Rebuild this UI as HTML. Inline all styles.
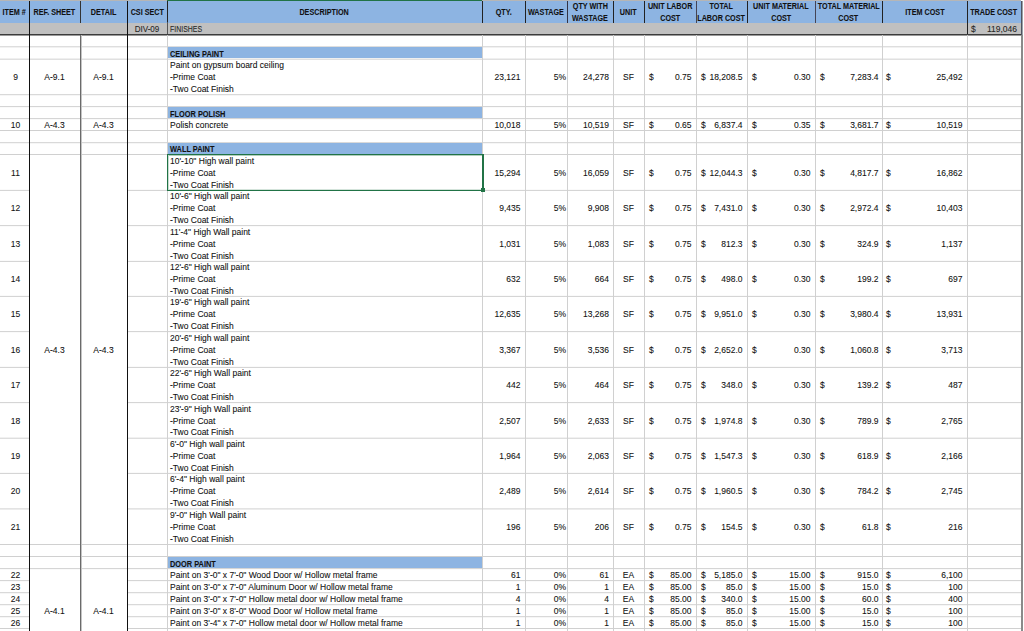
<!DOCTYPE html>
<html><head><meta charset="utf-8"><style>
html,body{margin:0;padding:0;}
body{width:1024px;height:631px;overflow:hidden;position:relative;background:#fff;font-family:"Liberation Sans",sans-serif;}
div{position:absolute;box-sizing:border-box;}
p{position:absolute;margin:0;white-space:nowrap;line-height:1;color:#111;-webkit-text-stroke:0.08px #111;}
p.t{font-size:8.5px;}
p.b{font-size:8.8px;font-weight:bold;}
</style></head><body>
<div style="left:0px;top:0px;width:1021px;height:1px;background:#b6b6b6;"></div>
<div style="left:167px;top:0px;width:315px;height:1px;background:#217346;"></div>
<div style="left:0px;top:1px;width:1022px;height:21.5px;background:#8db4e2;"></div>
<div style="left:0px;top:22.5px;width:1022px;height:11.5px;background:#c0c0c0;"></div>
<div style="left:0px;top:34px;width:1022px;height:1px;background:#3c3c3c;"></div>
<div style="left:0px;top:35px;width:1022px;height:1px;background:#9a9a9a;"></div>
<div style="left:0px;top:46px;width:29px;height:1px;background:#dedede;"></div>
<div style="left:0px;top:47px;width:29px;height:1px;background:#f1f1f1;"></div>
<div style="left:127px;top:46px;width:894px;height:1px;background:#dedede;"></div>
<div style="left:127px;top:47px;width:894px;height:1px;background:#f1f1f1;"></div>
<div style="left:0px;top:58px;width:29px;height:1px;background:#efefef;"></div>
<div style="left:0px;top:59px;width:29px;height:1px;background:#e0e0e0;"></div>
<div style="left:127px;top:58px;width:894px;height:1px;background:#efefef;"></div>
<div style="left:127px;top:59px;width:894px;height:1px;background:#e0e0e0;"></div>
<div style="left:0px;top:94px;width:29px;height:1px;background:#d9d9d9;"></div>
<div style="left:0px;top:95px;width:29px;height:1px;background:#f6f6f6;"></div>
<div style="left:127px;top:94px;width:894px;height:1px;background:#d9d9d9;"></div>
<div style="left:127px;top:95px;width:894px;height:1px;background:#f6f6f6;"></div>
<div style="left:0px;top:106px;width:29px;height:1px;background:#d5d5d5;"></div>
<div style="left:0px;top:107px;width:29px;height:1px;background:#fafafa;"></div>
<div style="left:127px;top:106px;width:894px;height:1px;background:#d5d5d5;"></div>
<div style="left:127px;top:107px;width:894px;height:1px;background:#fafafa;"></div>
<div style="left:0px;top:118px;width:29px;height:1px;background:#d5d5d5;"></div>
<div style="left:0px;top:119px;width:29px;height:1px;background:#fafafa;"></div>
<div style="left:127px;top:118px;width:894px;height:1px;background:#d5d5d5;"></div>
<div style="left:127px;top:119px;width:894px;height:1px;background:#fafafa;"></div>
<div style="left:0px;top:130px;width:29px;height:1px;background:#d0d0d0;"></div>
<div style="left:127px;top:130px;width:894px;height:1px;background:#d0d0d0;"></div>
<div style="left:0px;top:142px;width:29px;height:1px;background:#d9d9d9;"></div>
<div style="left:0px;top:143px;width:29px;height:1px;background:#f6f6f6;"></div>
<div style="left:127px;top:142px;width:894px;height:1px;background:#d9d9d9;"></div>
<div style="left:127px;top:143px;width:894px;height:1px;background:#f6f6f6;"></div>
<div style="left:0px;top:154px;width:29px;height:1px;background:#d0d0d0;"></div>
<div style="left:127px;top:154px;width:894px;height:1px;background:#d0d0d0;"></div>
<div style="left:0px;top:189px;width:29px;height:1px;background:#fafafa;"></div>
<div style="left:0px;top:190px;width:29px;height:1px;background:#d5d5d5;"></div>
<div style="left:127px;top:189px;width:894px;height:1px;background:#fafafa;"></div>
<div style="left:127px;top:190px;width:894px;height:1px;background:#d5d5d5;"></div>
<div style="left:0px;top:225px;width:29px;height:1px;background:#d5d5d5;"></div>
<div style="left:0px;top:226px;width:29px;height:1px;background:#fafafa;"></div>
<div style="left:127px;top:225px;width:894px;height:1px;background:#d5d5d5;"></div>
<div style="left:127px;top:226px;width:894px;height:1px;background:#fafafa;"></div>
<div style="left:0px;top:260px;width:29px;height:1px;background:#fafafa;"></div>
<div style="left:0px;top:261px;width:29px;height:1px;background:#d5d5d5;"></div>
<div style="left:127px;top:260px;width:894px;height:1px;background:#fafafa;"></div>
<div style="left:127px;top:261px;width:894px;height:1px;background:#d5d5d5;"></div>
<div style="left:0px;top:295px;width:29px;height:1px;background:#fafafa;"></div>
<div style="left:0px;top:296px;width:29px;height:1px;background:#d5d5d5;"></div>
<div style="left:127px;top:295px;width:894px;height:1px;background:#fafafa;"></div>
<div style="left:127px;top:296px;width:894px;height:1px;background:#d5d5d5;"></div>
<div style="left:0px;top:331px;width:29px;height:1px;background:#d5d5d5;"></div>
<div style="left:0px;top:332px;width:29px;height:1px;background:#fafafa;"></div>
<div style="left:127px;top:331px;width:894px;height:1px;background:#d5d5d5;"></div>
<div style="left:127px;top:332px;width:894px;height:1px;background:#fafafa;"></div>
<div style="left:0px;top:366px;width:29px;height:1px;background:#fafafa;"></div>
<div style="left:0px;top:367px;width:29px;height:1px;background:#d5d5d5;"></div>
<div style="left:127px;top:366px;width:894px;height:1px;background:#fafafa;"></div>
<div style="left:127px;top:367px;width:894px;height:1px;background:#d5d5d5;"></div>
<div style="left:0px;top:402px;width:29px;height:1px;background:#d5d5d5;"></div>
<div style="left:0px;top:403px;width:29px;height:1px;background:#fafafa;"></div>
<div style="left:127px;top:402px;width:894px;height:1px;background:#d5d5d5;"></div>
<div style="left:127px;top:403px;width:894px;height:1px;background:#fafafa;"></div>
<div style="left:0px;top:437px;width:29px;height:1px;background:#f1f1f1;"></div>
<div style="left:0px;top:438px;width:29px;height:1px;background:#dedede;"></div>
<div style="left:127px;top:437px;width:894px;height:1px;background:#f1f1f1;"></div>
<div style="left:127px;top:438px;width:894px;height:1px;background:#dedede;"></div>
<div style="left:0px;top:472px;width:29px;height:1px;background:#fafafa;"></div>
<div style="left:0px;top:473px;width:29px;height:1px;background:#d5d5d5;"></div>
<div style="left:127px;top:472px;width:894px;height:1px;background:#fafafa;"></div>
<div style="left:127px;top:473px;width:894px;height:1px;background:#d5d5d5;"></div>
<div style="left:0px;top:508px;width:29px;height:1px;background:#e3e3e3;"></div>
<div style="left:0px;top:509px;width:29px;height:1px;background:#ececec;"></div>
<div style="left:127px;top:508px;width:894px;height:1px;background:#e3e3e3;"></div>
<div style="left:127px;top:509px;width:894px;height:1px;background:#ececec;"></div>
<div style="left:0px;top:544px;width:29px;height:1px;background:#d0d0d0;"></div>
<div style="left:127px;top:544px;width:894px;height:1px;background:#d0d0d0;"></div>
<div style="left:0px;top:556px;width:29px;height:1px;background:#d0d0d0;"></div>
<div style="left:127px;top:556px;width:894px;height:1px;background:#d0d0d0;"></div>
<div style="left:0px;top:568px;width:29px;height:1px;background:#d5d5d5;"></div>
<div style="left:0px;top:569px;width:29px;height:1px;background:#fafafa;"></div>
<div style="left:127px;top:568px;width:894px;height:1px;background:#d5d5d5;"></div>
<div style="left:127px;top:569px;width:894px;height:1px;background:#fafafa;"></div>
<div style="left:0px;top:580px;width:29px;height:1px;background:#d5d5d5;"></div>
<div style="left:0px;top:581px;width:29px;height:1px;background:#fafafa;"></div>
<div style="left:127px;top:580px;width:894px;height:1px;background:#d5d5d5;"></div>
<div style="left:127px;top:581px;width:894px;height:1px;background:#fafafa;"></div>
<div style="left:0px;top:592px;width:29px;height:1px;background:#d9d9d9;"></div>
<div style="left:0px;top:593px;width:29px;height:1px;background:#f6f6f6;"></div>
<div style="left:127px;top:592px;width:894px;height:1px;background:#d9d9d9;"></div>
<div style="left:127px;top:593px;width:894px;height:1px;background:#f6f6f6;"></div>
<div style="left:0px;top:604px;width:29px;height:1px;background:#d9d9d9;"></div>
<div style="left:0px;top:605px;width:29px;height:1px;background:#f6f6f6;"></div>
<div style="left:127px;top:604px;width:894px;height:1px;background:#d9d9d9;"></div>
<div style="left:127px;top:605px;width:894px;height:1px;background:#f6f6f6;"></div>
<div style="left:0px;top:616px;width:29px;height:1px;background:#d9d9d9;"></div>
<div style="left:0px;top:617px;width:29px;height:1px;background:#f6f6f6;"></div>
<div style="left:127px;top:616px;width:894px;height:1px;background:#d9d9d9;"></div>
<div style="left:127px;top:617px;width:894px;height:1px;background:#f6f6f6;"></div>
<div style="left:0px;top:628px;width:29px;height:1px;background:#d0d0d0;"></div>
<div style="left:127px;top:628px;width:894px;height:1px;background:#d0d0d0;"></div>
<div style="left:29px;top:46px;width:98px;height:1px;background:#dedede;"></div>
<div style="left:29px;top:47px;width:98px;height:1px;background:#f1f1f1;"></div>
<div style="left:29px;top:58px;width:98px;height:1px;background:#efefef;"></div>
<div style="left:29px;top:59px;width:98px;height:1px;background:#e0e0e0;"></div>
<div style="left:29px;top:94px;width:98px;height:1px;background:#d9d9d9;"></div>
<div style="left:29px;top:95px;width:98px;height:1px;background:#f6f6f6;"></div>
<div style="left:29px;top:106px;width:98px;height:1px;background:#d5d5d5;"></div>
<div style="left:29px;top:107px;width:98px;height:1px;background:#fafafa;"></div>
<div style="left:29px;top:118px;width:98px;height:1px;background:#d5d5d5;"></div>
<div style="left:29px;top:119px;width:98px;height:1px;background:#fafafa;"></div>
<div style="left:29px;top:130px;width:98px;height:1px;background:#d0d0d0;"></div>
<div style="left:29px;top:142px;width:98px;height:1px;background:#d9d9d9;"></div>
<div style="left:29px;top:143px;width:98px;height:1px;background:#f6f6f6;"></div>
<div style="left:29px;top:154px;width:98px;height:1px;background:#d0d0d0;"></div>
<div style="left:29px;top:544px;width:98px;height:1px;background:#d0d0d0;"></div>
<div style="left:29px;top:556px;width:98px;height:1px;background:#d0d0d0;"></div>
<div style="left:29px;top:568px;width:98px;height:1px;background:#d5d5d5;"></div>
<div style="left:29px;top:569px;width:98px;height:1px;background:#fafafa;"></div>
<div style="left:168px;top:47px;width:314px;height:11px;background:#8db4e2;"></div>
<div style="left:168px;top:107px;width:314px;height:11px;background:#8db4e2;"></div>
<div style="left:168px;top:143px;width:314px;height:11px;background:#8db4e2;"></div>
<div style="left:168px;top:557px;width:314px;height:11px;background:#8db4e2;"></div>
<div style="left:167px;top:35px;width:1px;height:596px;background:#d0d0d0;"></div>
<div style="left:482px;top:35px;width:1px;height:596px;background:#d0d0d0;"></div>
<div style="left:525px;top:35px;width:1px;height:596px;background:#d0d0d0;"></div>
<div style="left:567px;top:35px;width:1px;height:596px;background:#d0d0d0;"></div>
<div style="left:613px;top:35px;width:1px;height:596px;background:#d0d0d0;"></div>
<div style="left:644px;top:35px;width:1px;height:596px;background:#d0d0d0;"></div>
<div style="left:696px;top:35px;width:1px;height:596px;background:#d0d0d0;"></div>
<div style="left:747px;top:35px;width:1px;height:596px;background:#d0d0d0;"></div>
<div style="left:815px;top:35px;width:1px;height:596px;background:#d0d0d0;"></div>
<div style="left:882px;top:35px;width:1px;height:596px;background:#d0d0d0;"></div>
<div style="left:967px;top:35px;width:1px;height:596px;background:#d0d0d0;"></div>
<div style="left:29px;top:22px;width:1px;height:609px;background:#111;"></div>
<div style="left:80px;top:35px;width:1px;height:596px;background:#6a6a6a;"></div>
<div style="left:81px;top:35px;width:1px;height:596px;background:#c4c4c4;"></div>
<div style="left:127px;top:22px;width:1px;height:609px;background:#111;"></div>
<div style="left:1021px;top:35px;width:2px;height:596px;background:#8a8a8a;"></div>
<div style="left:1021px;top:1px;width:1px;height:34px;background:#505560;"></div>
<div style="left:1022px;top:1px;width:1px;height:34px;background:#9aa0a8;"></div>
<div style="left:29px;top:1px;width:1px;height:21.5px;background:#111;"></div>
<div style="left:80px;top:1px;width:1px;height:21.5px;background:#333;"></div>
<div style="left:127px;top:1px;width:1px;height:21.5px;background:#111;"></div>
<div style="left:167px;top:1px;width:1px;height:21.5px;background:#222;"></div>
<div style="left:482px;top:1px;width:1px;height:21.5px;background:#222;"></div>
<div style="left:525px;top:1px;width:1px;height:21.5px;background:#222;"></div>
<div style="left:567px;top:1px;width:1px;height:21.5px;background:#334;"></div>
<div style="left:613px;top:1px;width:1px;height:21.5px;background:#222;"></div>
<div style="left:644px;top:1px;width:1px;height:21.5px;background:#222;"></div>
<div style="left:696px;top:1px;width:1px;height:21.5px;background:#445;"></div>
<div style="left:747px;top:1px;width:1px;height:21.5px;background:#222;"></div>
<div style="left:815px;top:1px;width:1px;height:21.5px;background:#445;"></div>
<div style="left:882px;top:1px;width:1px;height:21.5px;background:#222;"></div>
<div style="left:967px;top:1px;width:1px;height:21.5px;background:#222;"></div>
<div style="left:167px;top:22px;width:1px;height:12px;background:#555;"></div>
<div style="left:967px;top:22px;width:1px;height:12px;background:#222;"></div>
<div style="left:167px;top:154px;width:317px;height:1px;background:#217346;"></div>
<div style="left:168px;top:155px;width:314px;height:1px;background:#b1cebe;"></div>
<div style="left:167px;top:190px;width:317px;height:1px;background:#217346;"></div>
<div style="left:168px;top:189px;width:314px;height:1px;background:#d3e3da;"></div>
<div style="left:167px;top:154px;width:1px;height:37px;background:#217346;"></div>
<div style="left:168px;top:155px;width:1px;height:35px;background:#c8dcd1;"></div>
<div style="left:482px;top:154px;width:2px;height:37px;background:#217346;"></div>
<div style="left:481px;top:188px;width:4px;height:4px;background:#217346;"></div>
<p class="b" style="top:7.72px;left:-86.0px;width:200px;text-align:center;"><span style="display:inline-block;transform:scaleX(0.82);transform-origin:50% 0">ITEM #</span></p>
<p class="b" style="top:7.72px;left:-45.5px;width:200px;text-align:center;"><span style="display:inline-block;transform:scaleX(0.82);transform-origin:50% 0">REF. SHEET</span></p>
<p class="b" style="top:7.72px;left:3.5px;width:200px;text-align:center;"><span style="display:inline-block;transform:scaleX(0.82);transform-origin:50% 0">DETAIL</span></p>
<p class="b" style="top:7.72px;left:47.0px;width:200px;text-align:center;"><span style="display:inline-block;transform:scaleX(0.82);transform-origin:50% 0">CSI SECT</span></p>
<p class="b" style="top:7.72px;left:224.5px;width:200px;text-align:center;"><span style="display:inline-block;transform:scaleX(0.82);transform-origin:50% 0">DESCRIPTION</span></p>
<p class="b" style="top:7.72px;left:403.5px;width:200px;text-align:center;"><span style="display:inline-block;transform:scaleX(0.82);transform-origin:50% 0">QTY.</span></p>
<p class="b" style="top:7.72px;left:446.0px;width:200px;text-align:center;"><span style="display:inline-block;transform:scaleX(0.82);transform-origin:50% 0">WASTAGE</span></p>
<p class="b" style="top:1.92px;left:490.0px;width:200px;text-align:center;"><span style="display:inline-block;transform:scaleX(0.82);transform-origin:50% 0">QTY WITH</span></p>
<p class="b" style="top:14.02px;left:490.0px;width:200px;text-align:center;"><span style="display:inline-block;transform:scaleX(0.82);transform-origin:50% 0">WASTAGE</span></p>
<p class="b" style="top:7.72px;left:528.5px;width:200px;text-align:center;"><span style="display:inline-block;transform:scaleX(0.82);transform-origin:50% 0">UNIT</span></p>
<p class="b" style="top:1.92px;left:570.0px;width:200px;text-align:center;"><span style="display:inline-block;transform:scaleX(0.82);transform-origin:50% 0">UNIT LABOR</span></p>
<p class="b" style="top:14.02px;left:570.0px;width:200px;text-align:center;"><span style="display:inline-block;transform:scaleX(0.82);transform-origin:50% 0">COST</span></p>
<p class="b" style="top:1.92px;left:621.5px;width:200px;text-align:center;"><span style="display:inline-block;transform:scaleX(0.82);transform-origin:50% 0">TOTAL</span></p>
<p class="b" style="top:14.02px;left:621.5px;width:200px;text-align:center;"><span style="display:inline-block;transform:scaleX(0.82);transform-origin:50% 0">LABOR COST</span></p>
<p class="b" style="top:1.92px;left:681.0px;width:200px;text-align:center;"><span style="display:inline-block;transform:scaleX(0.82);transform-origin:50% 0">UNIT MATERIAL</span></p>
<p class="b" style="top:14.02px;left:681.0px;width:200px;text-align:center;"><span style="display:inline-block;transform:scaleX(0.82);transform-origin:50% 0">COST</span></p>
<p class="b" style="top:1.92px;left:748.5px;width:200px;text-align:center;"><span style="display:inline-block;transform:scaleX(0.82);transform-origin:50% 0">TOTAL MATERIAL</span></p>
<p class="b" style="top:14.02px;left:748.5px;width:200px;text-align:center;"><span style="display:inline-block;transform:scaleX(0.82);transform-origin:50% 0">COST</span></p>
<p class="b" style="top:7.72px;left:824.5px;width:200px;text-align:center;"><span style="display:inline-block;transform:scaleX(0.82);transform-origin:50% 0">ITEM COST</span></p>
<p class="b" style="top:7.72px;left:894.0px;width:200px;text-align:center;"><span style="display:inline-block;transform:scaleX(0.82);transform-origin:50% 0">TRADE COST</span></p>
<p class="t" style="top:25.30px;left:47.0px;width:200px;text-align:center;color:#262626;-webkit-text-stroke-color:#262626;"><span style="display:inline-block;transform:scaleX(0.95);transform-origin:50% 0">DIV-09</span></p>
<p class="t" style="top:25.30px;left:170px;color:#262626;-webkit-text-stroke-color:#262626;"><span style="display:inline-block;transform:scaleX(0.82);transform-origin:0 0">FINISHES</span></p>
<p class="t" style="top:25.30px;left:971px;color:#262626;-webkit-text-stroke-color:#262626;">$</p>
<p class="t" style="top:25.30px;right:7px;color:#262626;-webkit-text-stroke-color:#262626;">119,046</p>
<p class="b" style="top:50.08px;left:170px;"><span style="display:inline-block;transform:scaleX(0.84);transform-origin:0 0">CEILING PAINT</span></p>
<p class="b" style="top:109.52px;left:170px;"><span style="display:inline-block;transform:scaleX(0.84);transform-origin:0 0">FLOOR POLISH</span></p>
<p class="b" style="top:145.42px;left:170px;"><span style="display:inline-block;transform:scaleX(0.84);transform-origin:0 0">WALL PAINT</span></p>
<p class="b" style="top:559.52px;left:170px;"><span style="display:inline-block;transform:scaleX(0.84);transform-origin:0 0">DOOR PAINT</span></p>
<p class="t" style="top:61.20px;left:170px;">Paint on gypsum board ceiling</p>
<p class="t" style="top:73.05px;left:170px;">-Prime Coat</p>
<p class="t" style="top:84.89px;left:170px;">-Two Coat Finish</p>
<p class="t" style="top:73.05px;left:-84.5px;width:200px;text-align:center;">9</p>
<p class="t" style="top:73.05px;right:503.5px;">23,121</p>
<p class="t" style="top:73.05px;right:458px;">5%</p>
<p class="t" style="top:73.05px;right:415px;">24,278</p>
<p class="t" style="top:73.05px;left:528.5px;width:200px;text-align:center;">SF</p>
<p class="t" style="top:73.05px;left:649px;">$</p>
<p class="t" style="top:73.05px;right:332.5px;">0.75</p>
<p class="t" style="top:73.05px;left:701px;">$</p>
<p class="t" style="top:73.05px;right:281.5px;">18,208.5</p>
<p class="t" style="top:73.05px;left:752px;">$</p>
<p class="t" style="top:73.05px;right:213.5px;">0.30</p>
<p class="t" style="top:73.05px;left:820px;">$</p>
<p class="t" style="top:73.05px;right:145.5px;">7,283.4</p>
<p class="t" style="top:73.05px;left:886px;">$</p>
<p class="t" style="top:73.05px;right:61.5px;">25,492</p>
<p class="t" style="top:120.69px;left:170px;">Polish concrete</p>
<p class="t" style="top:120.69px;left:-84.5px;width:200px;text-align:center;">10</p>
<p class="t" style="top:120.69px;right:503.5px;">10,018</p>
<p class="t" style="top:120.69px;right:458px;">5%</p>
<p class="t" style="top:120.69px;right:415px;">10,519</p>
<p class="t" style="top:120.69px;left:528.5px;width:200px;text-align:center;">SF</p>
<p class="t" style="top:120.69px;left:649px;">$</p>
<p class="t" style="top:120.69px;right:332.5px;">0.65</p>
<p class="t" style="top:120.69px;left:701px;">$</p>
<p class="t" style="top:120.69px;right:281.5px;">6,837.4</p>
<p class="t" style="top:120.69px;left:752px;">$</p>
<p class="t" style="top:120.69px;right:213.5px;">0.35</p>
<p class="t" style="top:120.69px;left:820px;">$</p>
<p class="t" style="top:120.69px;right:145.5px;">3,681.7</p>
<p class="t" style="top:120.69px;left:886px;">$</p>
<p class="t" style="top:120.69px;right:61.5px;">10,519</p>
<p class="t" style="top:156.66px;left:170px;">10'-10" High wall paint</p>
<p class="t" style="top:168.63px;left:170px;">-Prime Coat</p>
<p class="t" style="top:180.59px;left:170px;">-Two Coat Finish</p>
<p class="t" style="top:168.63px;left:-84.5px;width:200px;text-align:center;">11</p>
<p class="t" style="top:168.63px;right:503.5px;">15,294</p>
<p class="t" style="top:168.63px;right:458px;">5%</p>
<p class="t" style="top:168.63px;right:415px;">16,059</p>
<p class="t" style="top:168.63px;left:528.5px;width:200px;text-align:center;">SF</p>
<p class="t" style="top:168.63px;left:649px;">$</p>
<p class="t" style="top:168.63px;right:332.5px;">0.75</p>
<p class="t" style="top:168.63px;left:701px;">$</p>
<p class="t" style="top:168.63px;right:281.5px;">12,044.3</p>
<p class="t" style="top:168.63px;left:752px;">$</p>
<p class="t" style="top:168.63px;right:213.5px;">0.30</p>
<p class="t" style="top:168.63px;left:820px;">$</p>
<p class="t" style="top:168.63px;right:145.5px;">4,817.7</p>
<p class="t" style="top:168.63px;left:886px;">$</p>
<p class="t" style="top:168.63px;right:61.5px;">16,862</p>
<p class="t" style="top:192.33px;left:170px;">10'-6" High wall paint</p>
<p class="t" style="top:204.06px;left:170px;">-Prime Coat</p>
<p class="t" style="top:215.79px;left:170px;">-Two Coat Finish</p>
<p class="t" style="top:204.06px;left:-84.5px;width:200px;text-align:center;">12</p>
<p class="t" style="top:204.06px;right:503.5px;">9,435</p>
<p class="t" style="top:204.06px;right:458px;">5%</p>
<p class="t" style="top:204.06px;right:415px;">9,908</p>
<p class="t" style="top:204.06px;left:528.5px;width:200px;text-align:center;">SF</p>
<p class="t" style="top:204.06px;left:649px;">$</p>
<p class="t" style="top:204.06px;right:332.5px;">0.75</p>
<p class="t" style="top:204.06px;left:701px;">$</p>
<p class="t" style="top:204.06px;right:281.5px;">7,431.0</p>
<p class="t" style="top:204.06px;left:752px;">$</p>
<p class="t" style="top:204.06px;right:213.5px;">0.30</p>
<p class="t" style="top:204.06px;left:820px;">$</p>
<p class="t" style="top:204.06px;right:145.5px;">2,972.4</p>
<p class="t" style="top:204.06px;left:886px;">$</p>
<p class="t" style="top:204.06px;right:61.5px;">10,403</p>
<p class="t" style="top:227.73px;left:170px;">11'-4" High Wall paint</p>
<p class="t" style="top:239.66px;left:170px;">-Prime Coat</p>
<p class="t" style="top:251.59px;left:170px;">-Two Coat Finish</p>
<p class="t" style="top:239.66px;left:-84.5px;width:200px;text-align:center;">13</p>
<p class="t" style="top:239.66px;right:503.5px;">1,031</p>
<p class="t" style="top:239.66px;right:458px;">5%</p>
<p class="t" style="top:239.66px;right:415px;">1,083</p>
<p class="t" style="top:239.66px;left:528.5px;width:200px;text-align:center;">SF</p>
<p class="t" style="top:239.66px;left:649px;">$</p>
<p class="t" style="top:239.66px;right:332.5px;">0.75</p>
<p class="t" style="top:239.66px;left:701px;">$</p>
<p class="t" style="top:239.66px;right:281.5px;">812.3</p>
<p class="t" style="top:239.66px;left:752px;">$</p>
<p class="t" style="top:239.66px;right:213.5px;">0.30</p>
<p class="t" style="top:239.66px;left:820px;">$</p>
<p class="t" style="top:239.66px;right:145.5px;">324.9</p>
<p class="t" style="top:239.66px;left:886px;">$</p>
<p class="t" style="top:239.66px;right:61.5px;">1,137</p>
<p class="t" style="top:263.26px;left:170px;">12'-6" High wall paint</p>
<p class="t" style="top:274.93px;left:170px;">-Prime Coat</p>
<p class="t" style="top:286.60px;left:170px;">-Two Coat Finish</p>
<p class="t" style="top:274.93px;left:-84.5px;width:200px;text-align:center;">14</p>
<p class="t" style="top:274.93px;right:503.5px;">632</p>
<p class="t" style="top:274.93px;right:458px;">5%</p>
<p class="t" style="top:274.93px;right:415px;">664</p>
<p class="t" style="top:274.93px;left:528.5px;width:200px;text-align:center;">SF</p>
<p class="t" style="top:274.93px;left:649px;">$</p>
<p class="t" style="top:274.93px;right:332.5px;">0.75</p>
<p class="t" style="top:274.93px;left:701px;">$</p>
<p class="t" style="top:274.93px;right:281.5px;">498.0</p>
<p class="t" style="top:274.93px;left:752px;">$</p>
<p class="t" style="top:274.93px;right:213.5px;">0.30</p>
<p class="t" style="top:274.93px;left:820px;">$</p>
<p class="t" style="top:274.93px;right:145.5px;">199.2</p>
<p class="t" style="top:274.93px;left:886px;">$</p>
<p class="t" style="top:274.93px;right:61.5px;">697</p>
<p class="t" style="top:298.33px;left:170px;">19'-6" High wall paint</p>
<p class="t" style="top:310.06px;left:170px;">-Prime Coat</p>
<p class="t" style="top:321.80px;left:170px;">-Two Coat Finish</p>
<p class="t" style="top:310.06px;left:-84.5px;width:200px;text-align:center;">15</p>
<p class="t" style="top:310.06px;right:503.5px;">12,635</p>
<p class="t" style="top:310.06px;right:458px;">5%</p>
<p class="t" style="top:310.06px;right:415px;">13,268</p>
<p class="t" style="top:310.06px;left:528.5px;width:200px;text-align:center;">SF</p>
<p class="t" style="top:310.06px;left:649px;">$</p>
<p class="t" style="top:310.06px;right:332.5px;">0.75</p>
<p class="t" style="top:310.06px;left:701px;">$</p>
<p class="t" style="top:310.06px;right:281.5px;">9,951.0</p>
<p class="t" style="top:310.06px;left:752px;">$</p>
<p class="t" style="top:310.06px;right:213.5px;">0.30</p>
<p class="t" style="top:310.06px;left:820px;">$</p>
<p class="t" style="top:310.06px;right:145.5px;">3,980.4</p>
<p class="t" style="top:310.06px;left:886px;">$</p>
<p class="t" style="top:310.06px;right:61.5px;">13,931</p>
<p class="t" style="top:333.73px;left:170px;">20'-6" High wall paint</p>
<p class="t" style="top:345.66px;left:170px;">-Prime Coat</p>
<p class="t" style="top:357.60px;left:170px;">-Two Coat Finish</p>
<p class="t" style="top:345.66px;left:-84.5px;width:200px;text-align:center;">16</p>
<p class="t" style="top:345.66px;right:503.5px;">3,367</p>
<p class="t" style="top:345.66px;right:458px;">5%</p>
<p class="t" style="top:345.66px;right:415px;">3,536</p>
<p class="t" style="top:345.66px;left:528.5px;width:200px;text-align:center;">SF</p>
<p class="t" style="top:345.66px;left:649px;">$</p>
<p class="t" style="top:345.66px;right:332.5px;">0.75</p>
<p class="t" style="top:345.66px;left:701px;">$</p>
<p class="t" style="top:345.66px;right:281.5px;">2,652.0</p>
<p class="t" style="top:345.66px;left:752px;">$</p>
<p class="t" style="top:345.66px;right:213.5px;">0.30</p>
<p class="t" style="top:345.66px;left:820px;">$</p>
<p class="t" style="top:345.66px;right:145.5px;">1,060.8</p>
<p class="t" style="top:345.66px;left:886px;">$</p>
<p class="t" style="top:345.66px;right:61.5px;">3,713</p>
<p class="t" style="top:369.33px;left:170px;">22'-6" High Wall paint</p>
<p class="t" style="top:381.06px;left:170px;">-Prime Coat</p>
<p class="t" style="top:392.80px;left:170px;">-Two Coat Finish</p>
<p class="t" style="top:381.06px;left:-84.5px;width:200px;text-align:center;">17</p>
<p class="t" style="top:381.06px;right:503.5px;">442</p>
<p class="t" style="top:381.06px;right:458px;">5%</p>
<p class="t" style="top:381.06px;right:415px;">464</p>
<p class="t" style="top:381.06px;left:528.5px;width:200px;text-align:center;">SF</p>
<p class="t" style="top:381.06px;left:649px;">$</p>
<p class="t" style="top:381.06px;right:332.5px;">0.75</p>
<p class="t" style="top:381.06px;left:701px;">$</p>
<p class="t" style="top:381.06px;right:281.5px;">348.0</p>
<p class="t" style="top:381.06px;left:752px;">$</p>
<p class="t" style="top:381.06px;right:213.5px;">0.30</p>
<p class="t" style="top:381.06px;left:820px;">$</p>
<p class="t" style="top:381.06px;right:145.5px;">139.2</p>
<p class="t" style="top:381.06px;left:886px;">$</p>
<p class="t" style="top:381.06px;right:61.5px;">487</p>
<p class="t" style="top:404.66px;left:170px;">23'-9" High Wall paint</p>
<p class="t" style="top:416.53px;left:170px;">-Prime Coat</p>
<p class="t" style="top:428.40px;left:170px;">-Two Coat Finish</p>
<p class="t" style="top:416.53px;left:-84.5px;width:200px;text-align:center;">18</p>
<p class="t" style="top:416.53px;right:503.5px;">2,507</p>
<p class="t" style="top:416.53px;right:458px;">5%</p>
<p class="t" style="top:416.53px;right:415px;">2,633</p>
<p class="t" style="top:416.53px;left:528.5px;width:200px;text-align:center;">SF</p>
<p class="t" style="top:416.53px;left:649px;">$</p>
<p class="t" style="top:416.53px;right:332.5px;">0.75</p>
<p class="t" style="top:416.53px;left:701px;">$</p>
<p class="t" style="top:416.53px;right:281.5px;">1,974.8</p>
<p class="t" style="top:416.53px;left:752px;">$</p>
<p class="t" style="top:416.53px;right:213.5px;">0.30</p>
<p class="t" style="top:416.53px;left:820px;">$</p>
<p class="t" style="top:416.53px;right:145.5px;">789.9</p>
<p class="t" style="top:416.53px;left:886px;">$</p>
<p class="t" style="top:416.53px;right:61.5px;">2,765</p>
<p class="t" style="top:440.13px;left:170px;">6'-0" High wall paint</p>
<p class="t" style="top:451.86px;left:170px;">-Prime Coat</p>
<p class="t" style="top:463.60px;left:170px;">-Two Coat Finish</p>
<p class="t" style="top:451.86px;left:-84.5px;width:200px;text-align:center;">19</p>
<p class="t" style="top:451.86px;right:503.5px;">1,964</p>
<p class="t" style="top:451.86px;right:458px;">5%</p>
<p class="t" style="top:451.86px;right:415px;">2,063</p>
<p class="t" style="top:451.86px;left:528.5px;width:200px;text-align:center;">SF</p>
<p class="t" style="top:451.86px;left:649px;">$</p>
<p class="t" style="top:451.86px;right:332.5px;">0.75</p>
<p class="t" style="top:451.86px;left:701px;">$</p>
<p class="t" style="top:451.86px;right:281.5px;">1,547.3</p>
<p class="t" style="top:451.86px;left:752px;">$</p>
<p class="t" style="top:451.86px;right:213.5px;">0.30</p>
<p class="t" style="top:451.86px;left:820px;">$</p>
<p class="t" style="top:451.86px;right:145.5px;">618.9</p>
<p class="t" style="top:451.86px;left:886px;">$</p>
<p class="t" style="top:451.86px;right:61.5px;">2,166</p>
<p class="t" style="top:475.43px;left:170px;">6'-4" High wall paint</p>
<p class="t" style="top:487.26px;left:170px;">-Prime Coat</p>
<p class="t" style="top:499.10px;left:170px;">-Two Coat Finish</p>
<p class="t" style="top:487.26px;left:-84.5px;width:200px;text-align:center;">20</p>
<p class="t" style="top:487.26px;right:503.5px;">2,489</p>
<p class="t" style="top:487.26px;right:458px;">5%</p>
<p class="t" style="top:487.26px;right:415px;">2,614</p>
<p class="t" style="top:487.26px;left:528.5px;width:200px;text-align:center;">SF</p>
<p class="t" style="top:487.26px;left:649px;">$</p>
<p class="t" style="top:487.26px;right:332.5px;">0.75</p>
<p class="t" style="top:487.26px;left:701px;">$</p>
<p class="t" style="top:487.26px;right:281.5px;">1,960.5</p>
<p class="t" style="top:487.26px;left:752px;">$</p>
<p class="t" style="top:487.26px;right:213.5px;">0.30</p>
<p class="t" style="top:487.26px;left:820px;">$</p>
<p class="t" style="top:487.26px;right:145.5px;">784.2</p>
<p class="t" style="top:487.26px;left:886px;">$</p>
<p class="t" style="top:487.26px;right:61.5px;">2,745</p>
<p class="t" style="top:510.96px;left:170px;">9'-0" High Wall paint</p>
<p class="t" style="top:522.83px;left:170px;">-Prime Coat</p>
<p class="t" style="top:534.70px;left:170px;">-Two Coat Finish</p>
<p class="t" style="top:522.83px;left:-84.5px;width:200px;text-align:center;">21</p>
<p class="t" style="top:522.83px;right:503.5px;">196</p>
<p class="t" style="top:522.83px;right:458px;">5%</p>
<p class="t" style="top:522.83px;right:415px;">206</p>
<p class="t" style="top:522.83px;left:528.5px;width:200px;text-align:center;">SF</p>
<p class="t" style="top:522.83px;left:649px;">$</p>
<p class="t" style="top:522.83px;right:332.5px;">0.75</p>
<p class="t" style="top:522.83px;left:701px;">$</p>
<p class="t" style="top:522.83px;right:281.5px;">154.5</p>
<p class="t" style="top:522.83px;left:752px;">$</p>
<p class="t" style="top:522.83px;right:213.5px;">0.30</p>
<p class="t" style="top:522.83px;left:820px;">$</p>
<p class="t" style="top:522.83px;right:145.5px;">61.8</p>
<p class="t" style="top:522.83px;left:886px;">$</p>
<p class="t" style="top:522.83px;right:61.5px;">216</p>
<p class="t" style="top:570.80px;left:170px;">Paint on 3'-0" x 7'-0" Wood Door w/ Hollow metal frame</p>
<p class="t" style="top:570.80px;left:-84.5px;width:200px;text-align:center;">22</p>
<p class="t" style="top:570.80px;right:503.5px;">61</p>
<p class="t" style="top:570.80px;right:458px;">0%</p>
<p class="t" style="top:570.80px;right:415px;">61</p>
<p class="t" style="top:570.80px;left:528.5px;width:200px;text-align:center;">EA</p>
<p class="t" style="top:570.80px;left:649px;">$</p>
<p class="t" style="top:570.80px;right:332.5px;">85.00</p>
<p class="t" style="top:570.80px;left:701px;">$</p>
<p class="t" style="top:570.80px;right:281.5px;">5,185.0</p>
<p class="t" style="top:570.80px;left:752px;">$</p>
<p class="t" style="top:570.80px;right:213.5px;">15.00</p>
<p class="t" style="top:570.80px;left:820px;">$</p>
<p class="t" style="top:570.80px;right:145.5px;">915.0</p>
<p class="t" style="top:570.80px;left:886px;">$</p>
<p class="t" style="top:570.80px;right:61.5px;">6,100</p>
<p class="t" style="top:582.90px;left:170px;">Paint on 3'-0" x 7'-0" Aluminum Door w/ Hollow metal frame</p>
<p class="t" style="top:582.90px;left:-84.5px;width:200px;text-align:center;">23</p>
<p class="t" style="top:582.90px;right:503.5px;">1</p>
<p class="t" style="top:582.90px;right:458px;">0%</p>
<p class="t" style="top:582.90px;right:415px;">1</p>
<p class="t" style="top:582.90px;left:528.5px;width:200px;text-align:center;">EA</p>
<p class="t" style="top:582.90px;left:649px;">$</p>
<p class="t" style="top:582.90px;right:332.5px;">85.00</p>
<p class="t" style="top:582.90px;left:701px;">$</p>
<p class="t" style="top:582.90px;right:281.5px;">85.0</p>
<p class="t" style="top:582.90px;left:752px;">$</p>
<p class="t" style="top:582.90px;right:213.5px;">15.00</p>
<p class="t" style="top:582.90px;left:820px;">$</p>
<p class="t" style="top:582.90px;right:145.5px;">15.0</p>
<p class="t" style="top:582.90px;left:886px;">$</p>
<p class="t" style="top:582.90px;right:61.5px;">100</p>
<p class="t" style="top:594.90px;left:170px;">Paint on 3'-0" x 7'-0" Hollow metal door w/ Hollow metal frame</p>
<p class="t" style="top:594.90px;left:-84.5px;width:200px;text-align:center;">24</p>
<p class="t" style="top:594.90px;right:503.5px;">4</p>
<p class="t" style="top:594.90px;right:458px;">0%</p>
<p class="t" style="top:594.90px;right:415px;">4</p>
<p class="t" style="top:594.90px;left:528.5px;width:200px;text-align:center;">EA</p>
<p class="t" style="top:594.90px;left:649px;">$</p>
<p class="t" style="top:594.90px;right:332.5px;">85.00</p>
<p class="t" style="top:594.90px;left:701px;">$</p>
<p class="t" style="top:594.90px;right:281.5px;">340.0</p>
<p class="t" style="top:594.90px;left:752px;">$</p>
<p class="t" style="top:594.90px;right:213.5px;">15.00</p>
<p class="t" style="top:594.90px;left:820px;">$</p>
<p class="t" style="top:594.90px;right:145.5px;">60.0</p>
<p class="t" style="top:594.90px;left:886px;">$</p>
<p class="t" style="top:594.90px;right:61.5px;">400</p>
<p class="t" style="top:606.90px;left:170px;">Paint on 3'-0" x 8'-0" Wood Door w/ Hollow metal frame</p>
<p class="t" style="top:606.90px;left:-84.5px;width:200px;text-align:center;">25</p>
<p class="t" style="top:606.90px;right:503.5px;">1</p>
<p class="t" style="top:606.90px;right:458px;">0%</p>
<p class="t" style="top:606.90px;right:415px;">1</p>
<p class="t" style="top:606.90px;left:528.5px;width:200px;text-align:center;">EA</p>
<p class="t" style="top:606.90px;left:649px;">$</p>
<p class="t" style="top:606.90px;right:332.5px;">85.00</p>
<p class="t" style="top:606.90px;left:701px;">$</p>
<p class="t" style="top:606.90px;right:281.5px;">85.0</p>
<p class="t" style="top:606.90px;left:752px;">$</p>
<p class="t" style="top:606.90px;right:213.5px;">15.00</p>
<p class="t" style="top:606.90px;left:820px;">$</p>
<p class="t" style="top:606.90px;right:145.5px;">15.0</p>
<p class="t" style="top:606.90px;left:886px;">$</p>
<p class="t" style="top:606.90px;right:61.5px;">100</p>
<p class="t" style="top:618.70px;left:170px;">Paint on 3'-4" x 7'-0" Hollow metal door w/ Hollow metal frame</p>
<p class="t" style="top:618.70px;left:-84.5px;width:200px;text-align:center;">26</p>
<p class="t" style="top:618.70px;right:503.5px;">1</p>
<p class="t" style="top:618.70px;right:458px;">0%</p>
<p class="t" style="top:618.70px;right:415px;">1</p>
<p class="t" style="top:618.70px;left:528.5px;width:200px;text-align:center;">EA</p>
<p class="t" style="top:618.70px;left:649px;">$</p>
<p class="t" style="top:618.70px;right:332.5px;">85.00</p>
<p class="t" style="top:618.70px;left:701px;">$</p>
<p class="t" style="top:618.70px;right:281.5px;">85.0</p>
<p class="t" style="top:618.70px;left:752px;">$</p>
<p class="t" style="top:618.70px;right:213.5px;">15.00</p>
<p class="t" style="top:618.70px;left:820px;">$</p>
<p class="t" style="top:618.70px;right:145.5px;">15.0</p>
<p class="t" style="top:618.70px;left:886px;">$</p>
<p class="t" style="top:618.70px;right:61.5px;">100</p>
<p class="t" style="top:73.05px;left:-45.5px;width:200px;text-align:center;">A-9.1</p>
<p class="t" style="top:73.05px;left:3.5px;width:200px;text-align:center;">A-9.1</p>
<p class="t" style="top:120.69px;left:-45.5px;width:200px;text-align:center;">A-4.3</p>
<p class="t" style="top:120.69px;left:3.5px;width:200px;text-align:center;">A-4.3</p>
<p class="t" style="top:345.66px;left:-45.5px;width:200px;text-align:center;">A-4.3</p>
<p class="t" style="top:345.66px;left:3.5px;width:200px;text-align:center;">A-4.3</p>
<p class="t" style="top:606.90px;left:-45.5px;width:200px;text-align:center;">A-4.1</p>
<p class="t" style="top:606.90px;left:3.5px;width:200px;text-align:center;">A-4.1</p>
</body></html>
